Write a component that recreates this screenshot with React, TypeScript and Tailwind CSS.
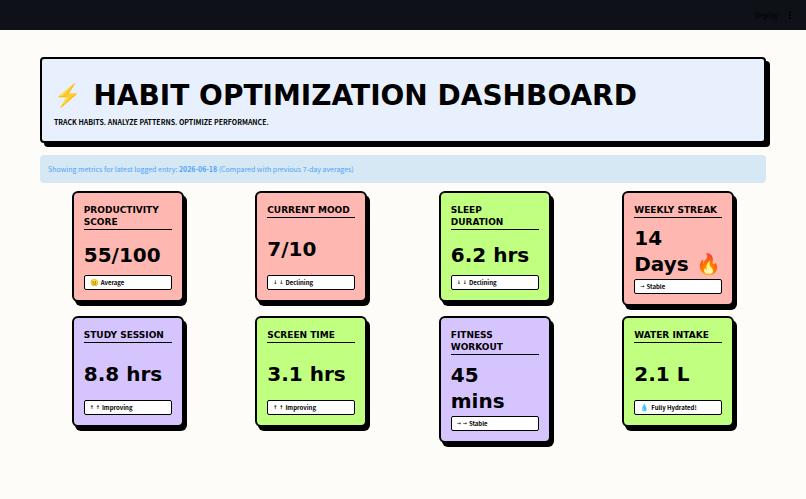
/* ---------------- TYPES ---------------- */

type Metric = {
  title: string;
  value: string;
  icon: string;
  status: string;
  color: string;
};

/* ---------------- DATA ---------------- */

const metrics: Metric[] = [
  { title: "Productivity\nScore", value: "55/100", icon: "😐", status: "Average", color: "bg-[#ffb7b2]" },
  { title: "Current Mood", value: "7/10", icon: "↓ ↓", status: "Declining", color: "bg-[#ffb7b2]" },
  { title: "Sleep\nDuration", value: "6.2 hrs", icon: "↓ ↓", status: "Declining", color: "bg-[#c0ff80]" },
  { title: "Weekly Streak", value: "14\nDays 🔥", icon: "→", status: "Stable", color: "bg-[#ffb7b2]" },
  { title: "Study Session", value: "8.8 hrs", icon: "↑ ↑", status: "Improving", color: "bg-[#d6c4ff]" },
  { title: "Screen Time", value: "3.1 hrs", icon: "↑ ↑", status: "Improving", color: "bg-[#c0ff80]" },
  { title: "Fitness\nWorkout", value: "45\nmins", icon: "→ →", status: "Stable", color: "bg-[#d6c4ff]" },
  { title: "Water Intake", value: "2.1 L", icon: "💧", status: "Fully Hydrated!", color: "bg-[#c0ff80]" },
];

/* ---------------- PAGE ---------------- */

export default function App() {
  return (
    <div className="min-h-screen bg-[#fdfcf8] font-['Noto_Sans_CJK_SC',sans-serif] text-black">

      {/* TOP BAR */}
      <header className="flex h-[30px] items-center justify-end gap-2 bg-[#0e1117] pr-3 text-[7px] text-black">
        <button>Deploy</button>
        <button aria-label="Menu" className="flex w-2 flex-col items-center gap-px">
          <span className="size-[2px] rounded-full bg-black" />
          <span className="size-[2px] rounded-full bg-black" />
          <span className="size-[2px] rounded-full bg-black" />
        </button>
      </header>

      <main className="px-10 pt-[27px] pb-10">

        {/* TITLE */}
        <div className="rounded-[4px] border-2 border-black bg-[#e8f0fe] px-3 pt-5 pb-[13px] shadow-[4px_4px_0_0_#000]">
          <h1 className="flex items-center gap-3 font-['DejaVu_Sans',sans-serif] text-[28px] leading-[34px] font-bold">
            <span className="font-['Noto_Color_Emoji'] text-[22px]">⚡</span>
            <span>HABIT OPTIMIZATION DASHBOARD</span>
          </h1>
          <p className="mt-[3px] text-[7px] leading-3 font-bold">
            TRACK HABITS. ANALYZE PATTERNS. OPTIMIZE PERFORMANCE.
          </p>
        </div>

        {/* INFO */}
        <div className="mt-3 rounded-[4px] bg-[#d7e8f5] p-2 text-[7px] leading-3 text-[#4ba3f5]">
          Showing metrics for latest logged entry: <strong>2026-06-18</strong> (Compared with previous 7-day averages)
        </div>

        {/* CARDS */}
        <div className="mt-2 grid grid-cols-4 items-start gap-x-2 gap-y-[10px]">
          {metrics.map((m) => (
            <MetricCard key={m.title} metric={m} />
          ))}
        </div>
      </main>
    </div>
  );
}

/* ================= METRIC CARD ================= */

function MetricCard({ metric }: { metric: Metric }) {
  const isArrow = /[↑↓→]/.test(metric.icon);

  return (
    <div
      className={`mx-auto flex min-h-[111px] w-28 flex-col rounded-[6px] border-2 border-black px-[10px] pt-[11px] pb-[10px] shadow-[3px_4px_0_0_#000] ${metric.color}`}
    >
      <h2 className="border-b border-black pb-px font-['DejaVu_Sans',sans-serif] text-[9px] leading-3 font-bold whitespace-pre-line uppercase">
        {metric.title}
      </h2>
      <div className="mt-[7px] mb-[2px] flex flex-1 items-center font-['DejaVu_Sans',sans-serif] text-xl leading-[26px] font-bold whitespace-pre-line">
        {metric.value}
      </div>
      <div className="flex h-[15px] items-center gap-[2px] rounded-[2px] border border-black bg-white px-[5px] text-[6px] font-bold">
        <span className={isArrow ? "font-['DejaVu_Sans'] text-[5px]" : "text-[7px]"}>{metric.icon}</span>
        <span>{metric.status}</span>
      </div>
    </div>
  );
}
